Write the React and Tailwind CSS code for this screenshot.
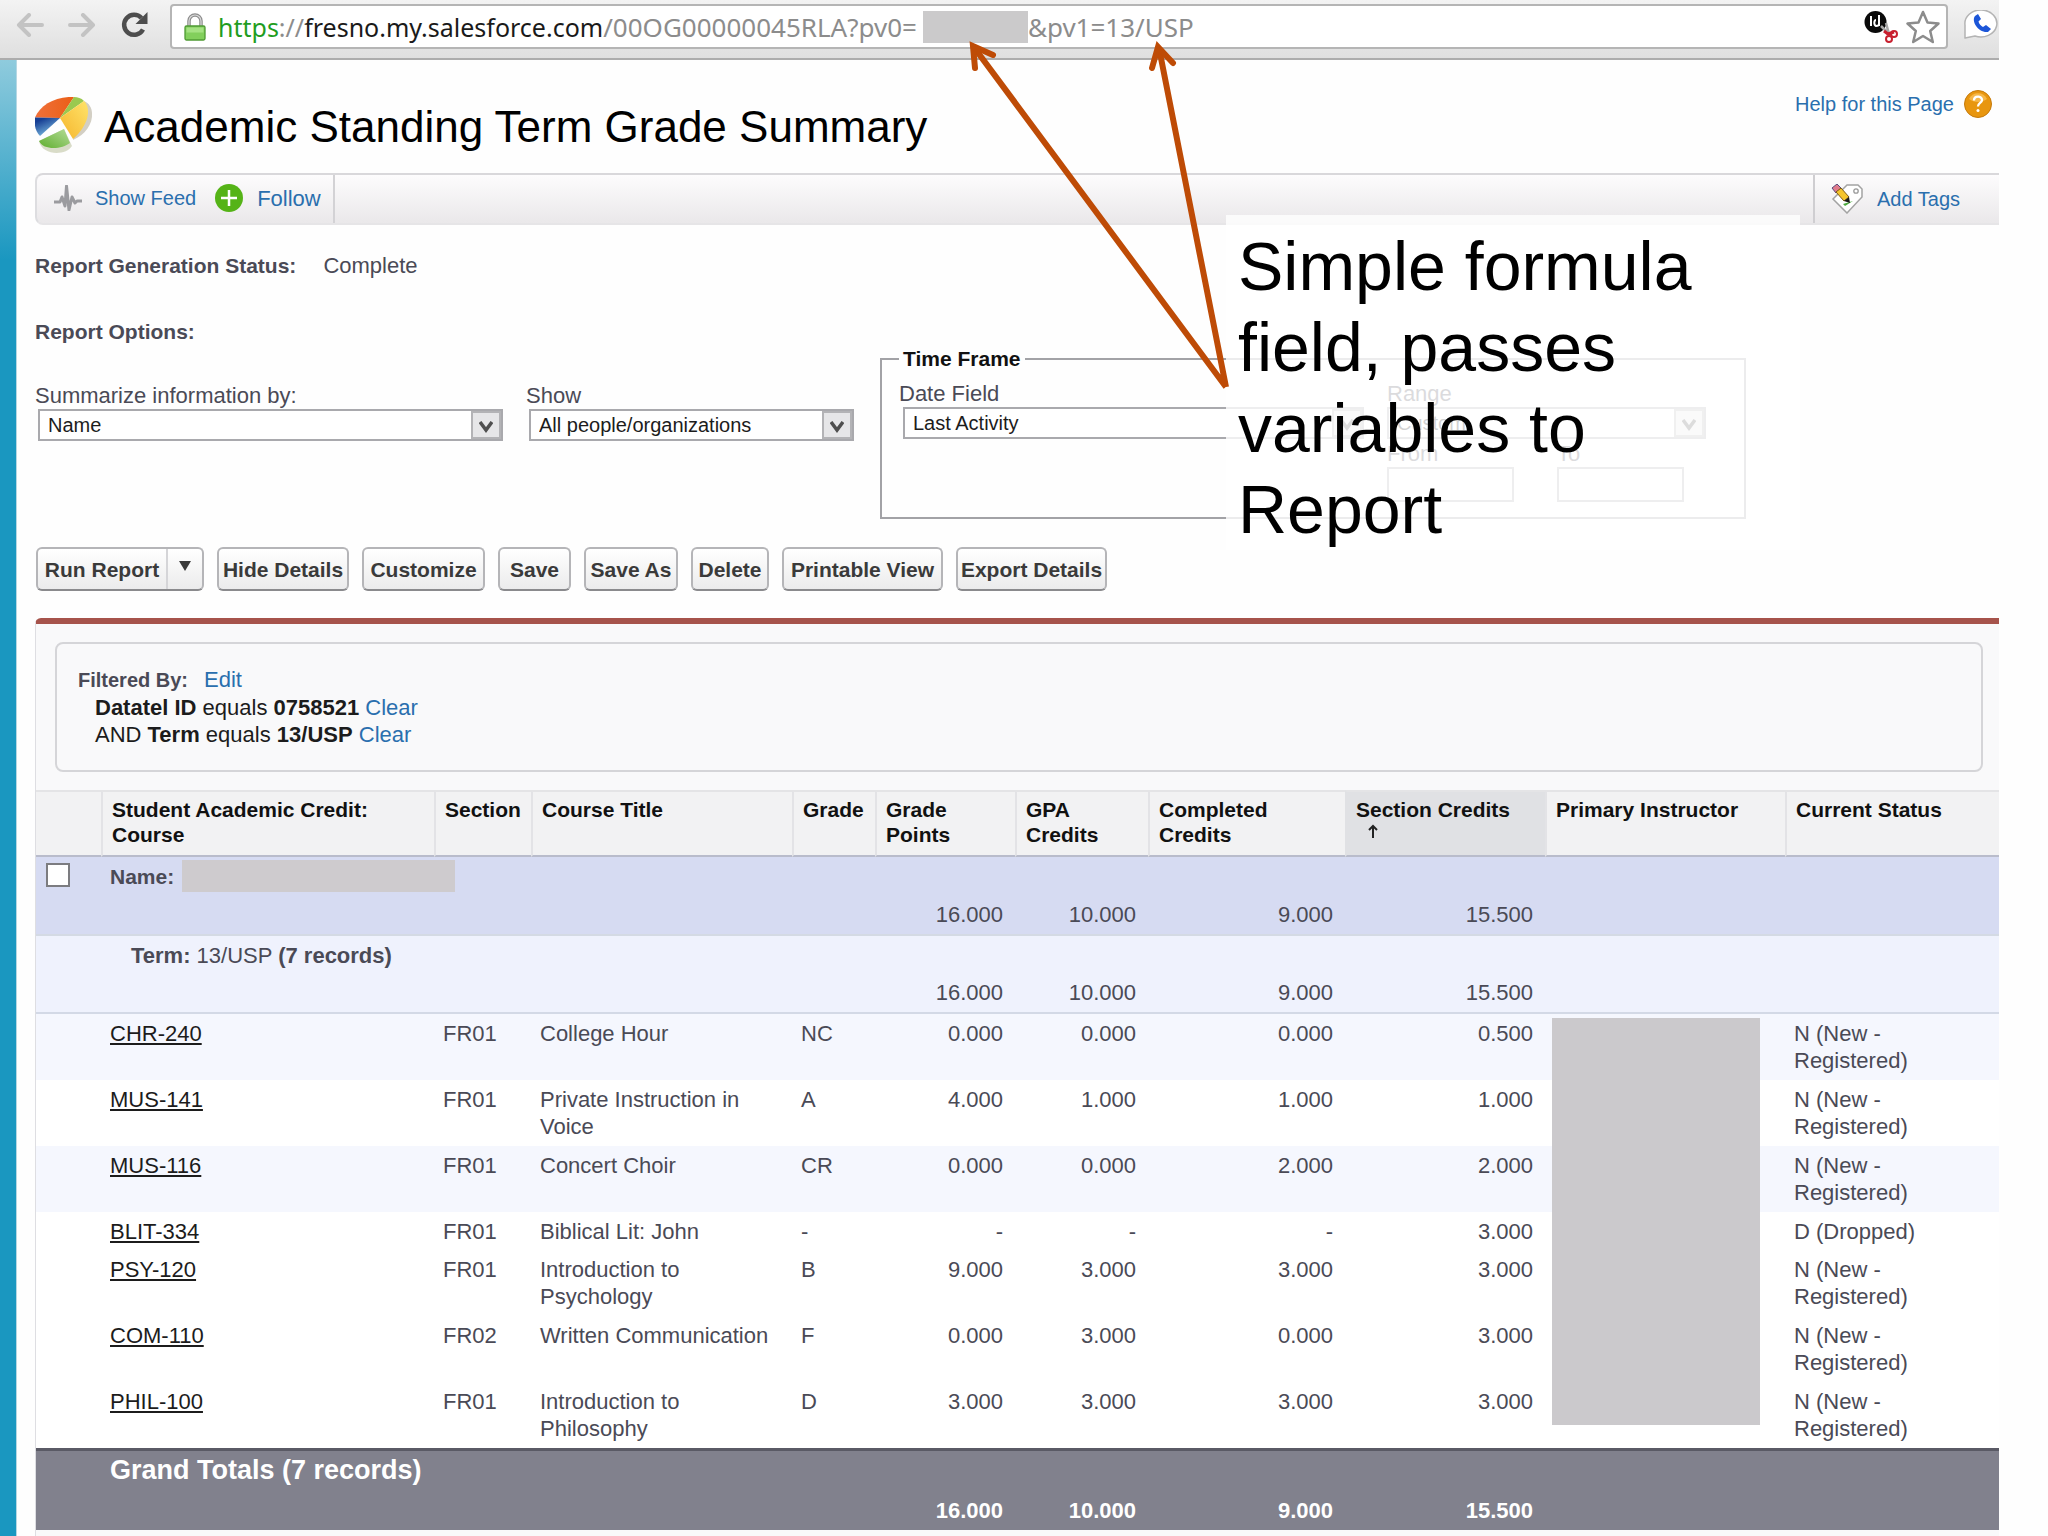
import React from "react";

const REPORT_ROWS = [
  { course: "CHR-240", section: "FR01", title: "College Hour", grade: "NC", points: "0.000", gpa: "0.000", completed: "0.000", credits: "0.500", status: "N (New - Registered)" },
  { course: "MUS-141", section: "FR01", title: "Private Instruction in Voice", grade: "A", points: "4.000", gpa: "1.000", completed: "1.000", credits: "1.000", status: "N (New - Registered)" },
  { course: "MUS-116", section: "FR01", title: "Concert Choir", grade: "CR", points: "0.000", gpa: "0.000", completed: "2.000", credits: "2.000", status: "N (New - Registered)" },
  { course: "BLIT-334", section: "FR01", title: "Biblical Lit: John", grade: "-", points: "-", gpa: "-", completed: "-", credits: "3.000", status: "D (Dropped)" },
  { course: "PSY-120", section: "FR01", title: "Introduction to Psychology", grade: "B", points: "9.000", gpa: "3.000", completed: "3.000", credits: "3.000", status: "N (New - Registered)" },
  { course: "COM-110", section: "FR02", title: "Written Communication", grade: "F", points: "0.000", gpa: "3.000", completed: "0.000", credits: "3.000", status: "N (New - Registered)" },
  { course: "PHIL-100", section: "FR01", title: "Introduction to Philosophy", grade: "D", points: "3.000", gpa: "3.000", completed: "3.000", credits: "3.000", status: "N (New - Registered)" },
];

const ACTIONS = [
  { label: "Hide Details", width: "w-[132px]" },
  { label: "Customize", width: "w-[123px]" },
  { label: "Save", width: "w-[73px]" },
  { label: "Save As", width: "w-[94px]" },
  { label: "Delete", width: "w-[78px]" },
  { label: "Printable View", width: "w-[161px]" },
  { label: "Export Details", width: "w-[151px]" },
];

const HEADERS = [
  "",
  "Student Academic Credit: Course",
  "Section",
  "Course Title",
  "Grade",
  "Grade Points",
  "GPA Credits",
  "Completed Credits",
  "Section Credits",
  "Primary Instructor",
  "Current Status",
];

function ArrowIcon({ flip }) {
  return (
    <svg viewBox="0 0 28 24" className={flip ? "h-6 w-7 -scale-x-100" : "h-6 w-7"} fill="none" stroke="#c3c3c3" strokeWidth="4" strokeLinecap="round" strokeLinejoin="round">
      <path d="M13 2 3 12l10 10M4 12h22" />
    </svg>
  );
}

function ReloadIcon() {
  return (
    <svg viewBox="0 0 28 28" className="h-7 w-7">
      <path d="M23 18.500A10 10 0 1 1 21.500 7" fill="none" stroke="#4d4d4d" strokeWidth="4.500" />
      <path d="M27.500 1v12H15.500z" fill="#4d4d4d" />
    </svg>
  );
}

function LockIcon() {
  return (
    <svg viewBox="0 0 22 28" className="h-7 w-[22px]">
      <path d="M5 14V8a6 6 0 0 1 12 0v6" fill="none" stroke="#8d8d8d" strokeWidth="3.500" />
      <path d="M5 14V8a6 6 0 0 1 12 0v6" fill="none" stroke="#d9d9d9" strokeWidth="1.200" />
      <rect x="1" y="13" width="20" height="14" rx="1.500" fill="#82cf5c" stroke="#4f9a33" strokeWidth="1.300" />
      <rect x="2.500" y="14.500" width="17" height="5" fill="#a5e283" />
    </svg>
  );
}

function CutBadgeIcon() {
  return (
    <svg viewBox="0 0 34 32" className="h-8 w-[34px]">
      <circle cx="11.500" cy="11" r="11" fill="#0a0a0a" />
      <path d="M7 5v10M12 9c-2 0-2.500 5 0 6 2 0 3-1 3-2M15 4v11" fill="none" stroke="#fff" strokeWidth="2" />
      <path d="m17 15 8 8M22 12l3 11" stroke="#a9a9a9" strokeWidth="2.500" />
      <path d="m20 20 4 3 6-2" fill="none" stroke="#c8202f" strokeWidth="3" />
      <circle cx="25" cy="28" r="3" fill="none" stroke="#c8202f" strokeWidth="2" />
      <circle cx="30" cy="23" r="3" fill="none" stroke="#c8202f" strokeWidth="2" />
    </svg>
  );
}

function StarIcon() {
  return (
    <svg viewBox="0 0 34 34" className="h-[34px] w-[34px]" fill="#fff" stroke="#8c8c8c" strokeWidth="2.500" strokeLinejoin="round">
      <path d="m17 2 4.500 10.500 11 1-8.300 7.500L26.800 32 17 26 7.200 32l2.600-11L1.500 13.500l11-1z" />
    </svg>
  );
}

function PhoneBubbleIcon() {
  return (
    <svg viewBox="0 0 36 30" className="h-[30px] w-9">
      <path d="M2 28V15a16 13.500 0 1 1 10 11z" fill="#fff" stroke="#b4b4b4" strokeWidth="1.500" strokeLinejoin="round" />
      <path d="M12 6c-4 5 3 17 13 16l3-3-5-4-3 2c-2-1-4-3-4.500-5.500L18 9l-3-5z" fill="#1c56d8" />
    </svg>
  );
}

function PieIcon() {
  return (
    <svg viewBox="0 0 58 58" className="h-[58px] w-[58px]">
      <defs>
        <linearGradient id="pieBlue" x1="0" y1="0" x2="0.6" y2="1">
          <stop offset="0.2" stopColor="#173f94" />
          <stop offset="1" stopColor="#7fc0e4" />
        </linearGradient>
        <linearGradient id="pieGreen" x1="0" y1="1" x2="1" y2="0">
          <stop offset="0" stopColor="#5fae2e" />
          <stop offset="1" stopColor="#b5dc98" />
        </linearGradient>
        <linearGradient id="pieYellow" x1="0" y1="1" x2="1" y2="0">
          <stop offset="0" stopColor="#f5b52c" />
          <stop offset="1" stopColor="#ffe36a" />
        </linearGradient>
        <linearGradient id="pieOrange" x1="0" y1="0" x2="1" y2="0">
          <stop offset="0" stopColor="#f0703a" />
          <stop offset="1" stopColor="#ea5f16" />
        </linearGradient>
      </defs>
      <path d="M38 43C50 38 58 27 57 16c0-5-3-10-8-12L40 30z" fill="#d3cfc4" />
      <path d="M0 20.500C5 8 21-1 39 0L25 21z" fill="url(#pieOrange)" />
      <path d="M39 0c4 0 7 1 10 4L25 21z" fill="#9bc94f" />
      <path d="M49 4C57 12 53 29 38 42L25 21z" fill="url(#pieYellow)" />
      <path d="M0 20.500 25 21 5 39C0 34-1 27 0 20.500z" fill="url(#pieBlue)" />
      <path d="M4 44 29 32l8 17c-6 10-30 10-33-5z" fill="#d9dcc8" />
      <path d="M4 44 29 32l6 14c-8 6-26 8-31-2z" fill="url(#pieGreen)" />
    </svg>
  );
}

function PulseIcon() {
  return (
    <svg viewBox="0 0 28 26" className="h-[26px] w-7" fill="none" stroke="#9b9b9f" strokeWidth="3" strokeLinejoin="round">
      <path d="M0 17h6l2-5 3 9L12.500 1 15 25l3-13 3 6 2-2h5" />
    </svg>
  );
}

function PlusIcon() {
  return (
    <svg viewBox="0 0 28 28" className="h-7 w-7">
      <circle cx="14" cy="14" r="14" fill="#55b317" />
      <path d="M14 6v16M6 14h16" stroke="#fff" strokeWidth="2.500" />
    </svg>
  );
}

function TagIcon() {
  return (
    <svg viewBox="0 0 32 30" className="h-[30px] w-8">
      <path d="M2 15 16 1h11l4 4v8L16 29z" fill="#fff" stroke="#a3a3a3" strokeWidth="1.500" />
      <circle cx="25" cy="7" r="2.200" fill="none" stroke="#999" strokeWidth="1.300" />
      <path d="m12 20 10-3-8 5z" fill="#4aa93c" />
      <path d="m1 4 5-4 4 4-5 5z" fill="#e07a8c" stroke="#5a4a7a" />
      <path d="m5 8 5-4 8 9-5 4z" fill="#f5c52d" stroke="#7d5a14" />
      <path d="m13 17 5-4 1 6z" fill="#1b1b1b" />
    </svg>
  );
}

function HelpIcon() {
  return (
    <svg viewBox="0 0 28 28" className="h-7 w-7">
      <circle cx="14" cy="14" r="13.500" fill="#e8960f" stroke="#c57a0c" />
      <path d="M5 9a10 10 0 0 1 18 0c-5 4-13 4-18 0z" fill="#f6b748" />
      <path d="M10 10.500c0-5 8-5 8-.500 0 3-4 3-4 6.500" fill="none" stroke="#fff" strokeWidth="2.300" />
      <circle cx="14" cy="20.500" r="1.500" fill="#fff" />
    </svg>
  );
}

function SelectBox({ id, value, width }) {
  return (
    <div className={`relative flex h-8 border-2 border-[#a9a9ad] bg-white ${width}`}>
      <select id={id} defaultValue={value} className="h-full w-full appearance-none bg-transparent pl-2 text-[20px] leading-[26px] text-[#1c1c1c] outline-none">
        <option>{value}</option>
      </select>
      <span className="pointer-events-none absolute inset-y-0 right-0 flex w-[30px] items-center justify-center border-2 border-[#b3b3b6] bg-[#e6e6e8]">
        <svg viewBox="0 0 14 12" className="mt-1 h-3 w-3.5" fill="none" stroke="#4f4f4f" strokeWidth="3.500">
          <path d="m1 1 6 8 6-8" />
        </svg>
      </span>
    </div>
  );
}

function BrowserBar() {
  return (
    <div className="mr-[49px] flex h-[60px] border-b-2 border-[#acacac] bg-linear-to-b from-[#f3f3f3] to-[#dfdfdf]">
      <div className="flex items-center gap-6 pr-[22px] pb-2 pl-4">
        <button aria-label="Back"><ArrowIcon /></button>
        <button aria-label="Forward"><ArrowIcon flip /></button>
        <button aria-label="Reload"><ReloadIcon /></button>
      </div>
      <div className="mt-1 flex h-[45px] min-w-0 flex-1 items-center rounded border-2 border-[#b5b5b5] bg-white pr-1.5 pl-3">
        <LockIcon />
        <div className="ml-3 flex flex-1 items-center font-['Noto_Sans','Open_Sans',sans-serif] text-[26px] leading-8 whitespace-nowrap text-[#8c8c8c]">
          <span className="text-[25px] text-[#1f9d1f]">https</span>
          <span className="text-[25px]">://</span>
          <span className="text-[25px] text-[#1a1a1a]">fresno.my.salesforce.com</span>
          <span>/00OG00000045RLA?pv0=</span>
          <span className="ml-1.5 h-8 w-[105px] bg-[#cbcacb]" />
          <span>&amp;pv1=13/USP</span>
        </div>
        <CutBadgeIcon />
        <button aria-label="Bookmark" className="ml-2"><StarIcon /></button>
      </div>
      <button aria-label="Call" className="ml-3.5 h-[50px] pl-px"><PhoneBubbleIcon /></button>
    </div>
  );
}

function Toolbar() {
  return (
    <div className="flex h-[52px] rounded-l-lg border-t-2 border-b-2 border-l-2 border-t-[#d9d8db] border-b-[#e6e5e7] border-l-[#dddde0] bg-linear-to-b from-[#fdfcfd] to-[#eae8ea] text-[20px] leading-[27px] text-[#2a6fae]">
      <div className="flex items-center border-r-2 border-[#d3d2d5] pr-3 pb-0.5 pl-[17px]">
        <PulseIcon />
        <a href="#feed" className="ml-[13px]">Show Feed</a>
        <span className="ml-[19px]"><PlusIcon /></span>
        <a href="#follow" className="ml-3.5 text-[22px]">Follow</a>
      </div>
      <div className="flex-1" />
      <div className="flex w-[186px] items-center border-l-2 border-[#cfced1] pl-4">
        <TagIcon />
        <a href="#tags" className="ml-3.5">Add Tags</a>
      </div>
    </div>
  );
}

function ReportOptions() {
  return (
    <div className="flex items-start">
      <div className="w-[491px] pt-[37px]">
        <label htmlFor="summarize" className="block">Summarize information by:</label>
        <div className="pl-[3px]"><SelectBox id="summarize" value="Name" width="w-[465px]" /></div>
      </div>
      <div className="w-[354px] pt-[37px]">
        <label htmlFor="show" className="block">Show</label>
        <div className="pl-[3px]"><SelectBox id="show" value="All people/organizations" width="w-[325px]" /></div>
      </div>
      <fieldset className="flex h-[174px] w-[866px] border-2 border-[#a2a2a6] pl-[17px]">
        <legend className="px-1 text-[21px] leading-[27px] font-bold text-[#111]">Time Frame</legend>
        <div className="w-[488px] pt-2">
          <label htmlFor="date-field" className="block">Date Field</label>
          <div className="pl-1"><SelectBox id="date-field" value="Last Activity" width="w-[461px]" /></div>
        </div>
        <div className="pt-2">
          <label htmlFor="range" className="block">Range</label>
          <SelectBox id="range" value="Custom" width="w-[319px]" />
          <div className="flex gap-[43px] pt-px">
            <div>
              <label htmlFor="from" className="block">From</label>
              <input id="from" type="text" className="block h-[35px] w-[127px] border-2 border-[#a9a9ad] bg-white px-2" />
            </div>
            <div>
              <label htmlFor="to" className="block">To</label>
              <input id="to" type="text" className="block h-[35px] w-[127px] border-2 border-[#a9a9ad] bg-white px-2" />
            </div>
          </div>
        </div>
      </fieldset>
    </div>
  );
}

function Actions() {
  return (
    <div className="mt-7 flex gap-[13px] pl-px text-[21px] font-bold text-[#3a3a3a]">
      <div className="flex h-11 w-[168px] overflow-hidden rounded-md border-2 border-[#b5b5b8] border-b-[#8a8a8d] bg-linear-to-b from-white to-[#ebebec]">
        <button className="flex-1 whitespace-nowrap">Run Report</button>
        <button aria-label="Run Report options" className="flex w-9 justify-center border-l-2 border-[#d5d5d8] pt-3">
          <svg viewBox="0 0 12 10" className="h-2.5 w-3"><path d="M0 0h12L6 10z" fill="#3a3a3a" /></svg>
        </button>
      </div>
      {ACTIONS.map((action) => (
        <button key={action.label} className={`h-11 rounded-md border-2 border-[#b5b5b8] border-b-[#8a8a8d] bg-linear-to-b from-white to-[#ebebec] whitespace-nowrap ${action.width}`}>
          {action.label}
        </button>
      ))}
    </div>
  );
}

function TotalCells() {
  return (
    <>
      {["16.000", "10.000", "9.000", "15.500"].map((value, i) => (
        <td key={i} className="pr-3 pb-1.5 text-right align-bottom">{value}</td>
      ))}
      <td colSpan={2} />
    </>
  );
}

function ReportTable() {
  return (
    <table className="w-full table-fixed border-separate border-spacing-0 text-left">
      <colgroup>
        <col className="w-[65px]" />
        <col className="w-[333px]" />
        <col className="w-[97px]" />
        <col className="w-[261px]" />
        <col className="w-[83px]" />
        <col className="w-[140px]" />
        <col className="w-[133px]" />
        <col className="w-[197px]" />
        <col className="w-[200px]" />
        <col className="w-[240px]" />
        <col />
      </colgroup>
      <thead>
        <tr className="h-[67px] bg-[#f2f2f3] text-[21px] leading-[25px] text-[#111]">
          {HEADERS.map((header, i) => (
            <th key={i} scope="col" className={`border-t-2 border-b-2 border-l-2 border-t-[#e4e4e6] border-b-[#b9bccb] pt-[5px] pr-1.5 pl-[9px] align-top font-bold first:border-l-0 ${header === "Section Credits" ? "border-l-[#e0e1e4] bg-[#e0e1e4]" : "border-l-[#e3e3e6]"}`}>
              {header}
              {header === "Section Credits" && (
                <svg viewBox="0 0 10 14" className="mt-0.5 ml-3 block h-3.5 w-2.5" fill="none" stroke="#222" strokeWidth="2">
                  <path d="M5 14V2M1 6l4-4 4 4" />
                </svg>
              )}
            </th>
          ))}
        </tr>
      </thead>
      <tbody>
        <tr className="h-[79px] bg-[#d6dbf2] *:border-b-2 *:border-[#d4dae4]">
          <td className="pt-1.5 pl-2.5 align-top">
            <input type="checkbox" aria-label="Select group" className="block h-6 w-6 appearance-none border-2 border-[#7c7c80] bg-white" />
          </td>
          <td colSpan={4} className="pt-[3px] pl-[9px] align-top">
            <div className="flex">
              <span className="w-[72px] pt-[3px] text-[21px] font-bold">Name:</span>
              <span className="h-8 w-[273px] bg-[#cecbce]" />
            </div>
          </td>
          <TotalCells />
        </tr>
        <tr className="h-[78px] bg-[#eff2fd] *:border-b-2 *:border-[#d3d9e6]">
          <td />
          <td colSpan={4} className="pt-1.5 pl-[30px] align-top">
            <b>Term:</b> 13/USP <b>(7 records)</b>
          </td>
          <TotalCells />
        </tr>
        {REPORT_ROWS.map((row, i) => (
          <tr key={row.course} className={`*:pt-1.5 *:pb-[5px] *:pl-[9px] *:align-top ${i === 0 || i === 2 ? "bg-[#f5f7fe]" : "bg-white"} ${row.status === "D (Dropped)" ? "h-[38px]" : "h-[66px]"}`}>
            <td />
            <td><a href={`#${row.course}`} className="text-[#1c1c1c] underline decoration-2 underline-offset-2">{row.course}</a></td>
            <td>{row.section}</td>
            <td>{row.title}</td>
            <td>{row.grade}</td>
            <td className="pr-3 text-right">{row.points}</td>
            <td className="pr-3 text-right">{row.gpa}</td>
            <td className="pr-3 text-right">{row.completed}</td>
            <td className="pr-3 text-right">{row.credits}</td>
            <td className="relative">
              {i === 0 && <div className="absolute top-1 left-[7px] z-10 h-[407px] w-[208px] bg-[#cbc9cc]" />}
            </td>
            <td><div className="w-[160px]">{row.status}</div></td>
          </tr>
        ))}
      </tbody>
      <tfoot>
        <tr className="h-[82px] bg-[#81818d] font-bold text-white *:border-t-[3px] *:border-[#5a5a65]">
          <td />
          <td colSpan={4} className="pt-1 pl-[9px] align-top text-[27px] leading-[30px]">Grand Totals (7 records)</td>
          <TotalCells />
        </tr>
      </tfoot>
    </table>
  );
}

function Callout() {
  return (
    <>
      <div className="absolute top-[215px] left-[1226px] w-[574px] bg-white/80 px-3 pt-[11px] text-[68px] leading-[81px] text-black">
        Simple formula field, passes variables to Report
      </div>
      <svg viewBox="0 0 300 400" className="pointer-events-none absolute top-0 left-[940px] h-[400px] w-[300px]" fill="none" stroke="#be4b06" strokeWidth="6">
        <path d="M286 387 33 46M286 387 219 48" />
        <path d="m35 68-2-22 20 9M212 68l6-21 15 16" strokeLinecap="round" />
      </svg>
    </>
  );
}

export default function App() {
  return (
    <div className="relative flex min-h-screen flex-col bg-[#fefefe] font-['Liberation_Sans',Arial,sans-serif] text-[22px] leading-[27px] text-[#4a4a56]">
      <BrowserBar />
      <div className="flex flex-1">
        <div className="w-[17px] border-r border-[#b5d7e3] bg-[linear-gradient(#8fcbdd,#1a97c0_200px)]" />
        <main className="mr-[49px] ml-[18px] flex min-w-0 flex-1 flex-col">
          <header className="flex h-[113px] justify-between">
            <div className="flex items-start gap-[11px] pt-[37px]">
              <PieIcon />
              <h1 className="pt-[5px] text-[44px] leading-[50px] text-black">Academic Standing Term Grade Summary</h1>
            </div>
            <a href="#help" className="flex h-[60px] items-center gap-2.5 pt-7 pr-[7px] text-[20px] text-[#2a6fae]">
              Help for this Page
              <HelpIcon />
            </a>
          </header>
          <Toolbar />
          <p className="mt-[27px]"><b className="mr-[27px] text-[21px]">Report Generation Status:</b>Complete</p>
          <p className="mt-[39px] text-[21px] font-bold">Report Options:</p>
          <ReportOptions />
          <Actions />
          <section className="mt-[27px] flex flex-1 flex-col rounded-tl-md border-t-[6px] border-l border-t-[#a6534b] border-l-[#dedee2] bg-[#f9f9fa]">
            <div className="mt-[18px] mr-4 mb-[18px] ml-[19px] h-[130px] rounded-lg border-2 border-[#d5d5d8] pt-[22px] pl-[21px]">
              <p><b className="mr-4 text-[20px]">Filtered By:</b><a href="#edit" className="text-[22px] text-[#2a6fae]">Edit</a></p>
              <p className="pl-[17px] text-[#1c1c1c]"><b>Datatel ID</b> equals <b>0758521</b> <a href="#clear-id" className="text-[#2a6fae]">Clear</a></p>
              <p className="pl-[17px] text-[#1c1c1c]">AND <b>Term</b> equals <b>13/USP</b> <a href="#clear-term" className="text-[#2a6fae]">Clear</a></p>
            </div>
            <ReportTable />
          </section>
        </main>
      </div>
      <Callout />
    </div>
  );
}
